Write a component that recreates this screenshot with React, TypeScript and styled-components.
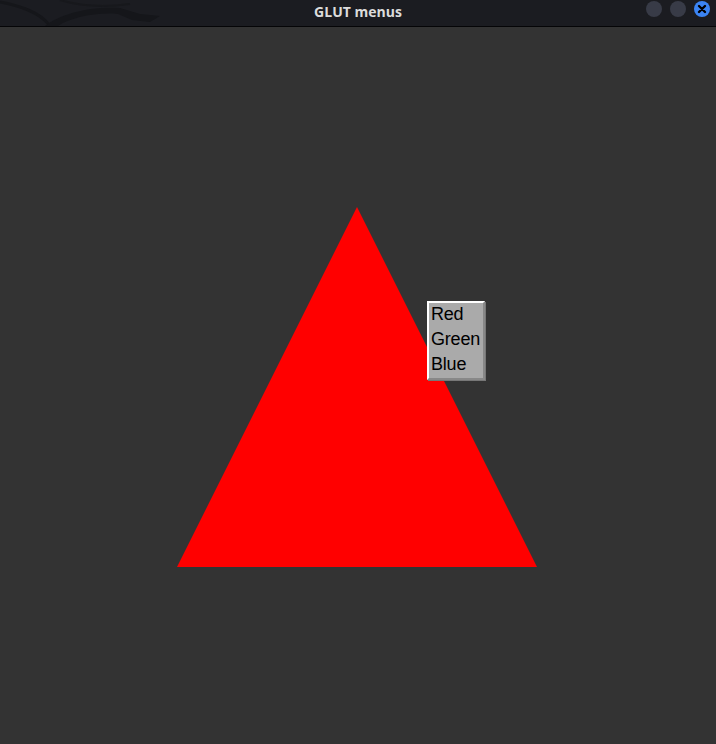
import React from "react";
import styled, { createGlobalStyle } from "styled-components";

const Global = createGlobalStyle`
  html, body { margin: 0; padding: 0; background: #333333; }
  body { width: 716px; height: 744px; overflow: hidden; }
`;

const Window = styled.div`
  width: 716px;
  height: 744px;
  display: flex;
  flex-direction: column;
  background: #333333;
`;

const TitleBar = styled.div`
  position: relative;
  height: 26px;
  flex: 0 0 26px;
  background: #1b1c21;
  border-bottom: 1px solid #050507;
  display: flex;
  align-items: center;
  justify-content: center;
  overflow: hidden;
`;

const Wallpaper = styled.svg`
  position: absolute;
  left: 0;
  top: 0;
`;

const Title = styled.span`
  position: relative;
  font-family: "Open Sans", "Noto Sans", "DejaVu Sans", sans-serif;
  font-weight: 700;
  font-size: 14px;
  color: #dcdcdc;
  margin-top: -3px;
`;

const Controls = styled.div`
  position: absolute;
  right: 6px;
  top: 1px;
  display: flex;
  gap: 8px;
`;

const Circle = styled.div<{ $close?: boolean }>`
  width: 16px;
  height: 16px;
  border-radius: 50%;
  background: ${(p) => (p.$close ? "#3b84f3" : "#383b47")};
  display: flex;
  align-items: center;
  justify-content: center;
`;

const Canvas = styled.div`
  position: relative;
  flex: 1;
  background: #333333;
`;

const Scene = styled.svg`
  display: block;
`;

const Menu = styled.div`
  position: absolute;
  left: 427px;
  top: 274px;
  width: 52px;
  padding: 0 0 0 2px;
  background: #aaaaaa;
  border-top: 2px solid #ffffff;
  border-left: 2px solid #ffffff;
  border-right: 2px solid #888888;
  border-bottom: 2px solid #888888;
  box-shadow: 1px 1px 0 #777777;
  display: flex;
  flex-direction: column;
`;

const Item = styled.div`
  height: 25px;
  line-height: 23px;
  font-family: "Liberation Sans", Arial, sans-serif;
  font-size: 18px;
  letter-spacing: -0.2px;
  color: #000000;
  white-space: nowrap;
`;

export default function App() {
  return (
    <>
      <Global />
      <Window>
        <TitleBar>
          <Wallpaper width="200" height="26" viewBox="0 0 200 26">
            <path
              d="M0 2 C20 6 40 12 50 26"
              stroke="#15161a"
              strokeWidth="3"
              fill="none"
            />
            <path
              d="M45 26 C60 14 90 6 120 8 L140 14 L160 16 L150 22 L132 20 L118 14 C95 12 70 18 58 26 Z"
              fill="#15161a"
            />
            <path
              d="M60 0 C80 6 100 8 130 4"
              stroke="#17181c"
              strokeWidth="2"
              fill="none"
            />
          </Wallpaper>
          <Title>GLUT menus</Title>
          <Controls>
            <Circle />
            <Circle />
            <Circle $close>
              <svg width="10" height="10" viewBox="0 0 10 10">
                <path
                  d="M2 2 L8 8 M8 2 L2 8"
                  stroke="#000"
                  strokeWidth="2.4"
                  strokeLinecap="round"
                />
              </svg>
            </Circle>
          </Controls>
        </TitleBar>
        <Canvas>
          <Scene width="716" height="717" viewBox="0 0 716 717">
            <polygon points="357,180 177,540 537,540" fill="#ff0000" />
          </Scene>
          <Menu>
            <Item>Red</Item>
            <Item>Green</Item>
            <Item>Blue</Item>
          </Menu>
        </Canvas>
      </Window>
    </>
  );
}
